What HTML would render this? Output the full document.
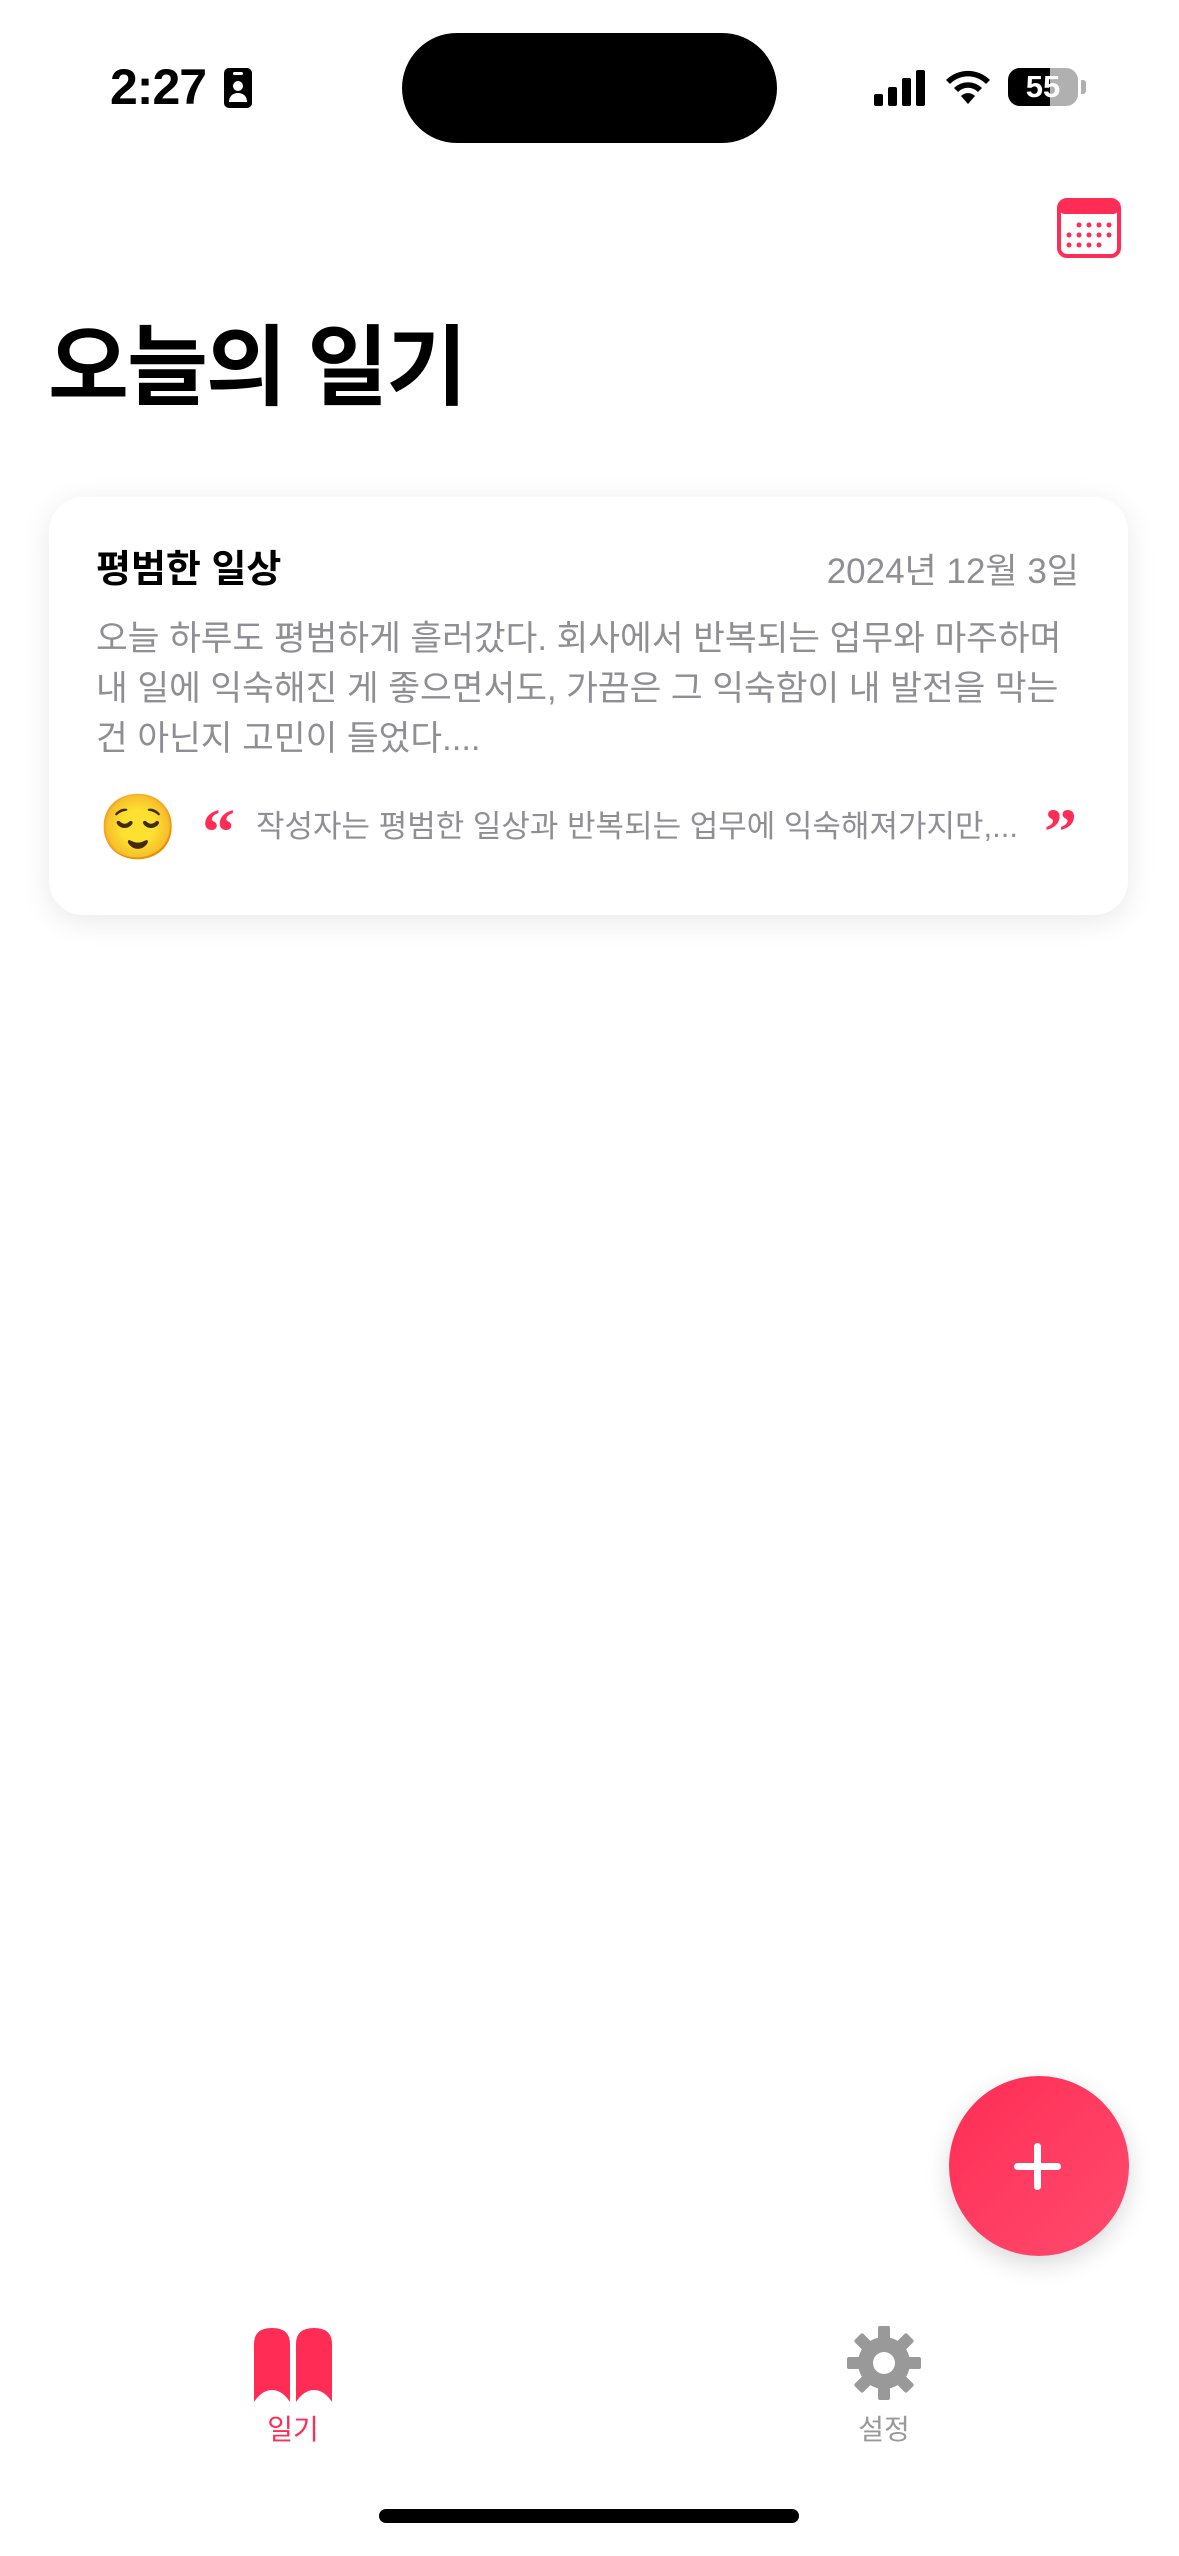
<!DOCTYPE html>
<html><head><meta charset="utf-8"><style>
*{margin:0;padding:0;box-sizing:border-box}
body{width:1179px;height:2556px;background:#fff;position:relative;overflow:hidden;font-family:"Liberation Sans","Noto Sans CJK KR",sans-serif}
.a{position:absolute}
</style></head><body>
<div class="a" style="left:110px;top:58px;font-size:50px;font-weight:bold;letter-spacing:-1px">2:27</div>
<svg class="a" style="left:222px;top:66px" width="32" height="44" viewBox="0 0 32 44"><rect x="2" y="2" width="28" height="40" rx="5" fill="#000"/><circle cx="16" cy="20" r="5" fill="#fff"/><path d="M7 36c0-6 4-9 9-9s9 3 9 9z" fill="#fff"/><rect x="11" y="6" width="10" height="3" rx="1.5" fill="#fff"/></svg>
<div class="a" style="left:402px;top:33px;width:375px;height:110px;border-radius:55px;background:#000"></div>
<svg class="a" style="left:874px;top:68px" width="56" height="38"><rect x="0" y="26" width="9" height="12" rx="2"/><rect x="14" y="19" width="9" height="19" rx="2"/><rect x="28" y="10" width="9" height="28" rx="2"/><rect x="42" y="2" width="9" height="36" rx="2"/></svg>
<svg class="a" style="left:944px;top:66px" width="48" height="38" viewBox="0 0 48 38"><path d="M24 38l-7-8a10 10 0 0 1 14 0z"/><path d="M10 22a20 20 0 0 1 28 0l-4 4a14 14 0 0 0-20 0z"/><path d="M2 14a31 31 0 0 1 44 0l-4 4a25 25 0 0 0-36 0z"/></svg>
<div class="a" style="left:1008px;top:68px;width:70px;height:38px;border-radius:12px;background:#b0b0b0;overflow:hidden"><div style="width:42px;height:38px;background:#000"></div></div>
<div class="a" style="left:1008px;top:68px;width:70px;height:38px;font-size:31px;font-weight:bold;color:#fff;text-align:center;line-height:38px">55</div>
<div class="a" style="left:1081px;top:80px;width:5px;height:14px;border-radius:0 3px 3px 0;background:#b0b0b0"></div>
<svg class="a" style="left:1057px;top:198px" width="64" height="60" viewBox="0 0 64 60"><rect x="2" y="2" width="60" height="56" rx="8" fill="none" stroke="#ff2d55" stroke-width="4"/><rect x="2" y="2" width="60" height="14" rx="6" fill="#ff2d55"/><g fill="#ff2d55"><circle cx="22" cy="27" r="2.5"/><circle cx="32" cy="27" r="2.5"/><circle cx="42" cy="27" r="2.5"/><circle cx="52" cy="27" r="2.5"/><circle cx="12" cy="37" r="2.5"/><circle cx="22" cy="37" r="2.5"/><circle cx="32" cy="37" r="2.5"/><circle cx="42" cy="37" r="2.5"/><circle cx="52" cy="37" r="2.5"/><circle cx="12" cy="47" r="2.5"/><circle cx="22" cy="47" r="2.5"/><circle cx="32" cy="47" r="2.5"/><circle cx="42" cy="47" r="2.5"/></g></svg>
<div class="a" style="left:48px;top:308px;font-size:88px;font-weight:bold;letter-spacing:-2px;line-height:120px">오늘의 일기</div>
<div class="a" style="left:49px;top:497px;width:1079px;height:418px;border-radius:34px;background:#fff;box-shadow:0 6px 30px rgba(0,0,0,0.09)"></div>
<div class="a" style="left:96px;top:545px;font-size:38px;font-weight:bold;line-height:50px">평범한 일상</div>
<div class="a" style="right:100px;top:547px;font-size:35px;color:#8e8e93;line-height:50px">2024년 12월 3일</div>
<div class="a" style="left:96px;top:614px;width:1010px;font-size:34.5px;color:#8e8e93;line-height:50px;white-space:nowrap">오늘 하루도 평범하게 흘러갔다. 회사에서 반복되는 업무와 마주하며<br>내 일에 익숙해진 게 좋으면서도, 가끔은 그 익숙함이 내 발전을 막는<br>건 아닌지 고민이 들었다....</div>
<div class="a" style="left:98px;top:790px;font-size:64px;line-height:76px;font-family:'Noto Color Emoji','DejaVu Sans',sans-serif">😌</div>
<div class="a" style="left:202px;top:798px;font-size:66px;font-weight:bold;color:#ff2d55;line-height:70px;font-family:'Liberation Serif',serif">“</div>
<div class="a" style="left:256px;top:807px;font-size:31px;color:#8e8e93;line-height:40px">작성자는 평범한 일상과 반복되는 업무에 익숙해져가지만,...</div>
<div class="a" style="left:1044px;top:798px;font-size:66px;font-weight:bold;color:#ff2d55;line-height:70px;font-family:'Liberation Serif',serif">”</div>
<div class="a" style="left:949px;top:2076px;width:180px;height:180px;border-radius:50%;background:linear-gradient(135deg,#ff2d55,#ff4b6e);box-shadow:0 8px 24px rgba(0,0,0,0.15)"></div>
<div class="a" style="left:1014px;top:2163px;width:47px;height:7px;border-radius:4px;background:#fff"></div>
<div class="a" style="left:1034px;top:2143px;width:7px;height:47px;border-radius:4px;background:#fff"></div>
<svg class="a" style="left:254px;top:2328px" width="80" height="74" viewBox="0 0 80 74"><path d="M0 16Q0 0 18 0Q36 0 36 16V74Q28 62 18 62Q8 62 0 74z" fill="#ff2d55"/><path d="M42 16Q42 0 60 0Q78 0 78 16V74Q70 62 60 62Q50 62 42 74z" fill="#ff2d55"/></svg>
<div class="a" style="left:253px;top:2410px;width:80px;text-align:center;font-size:28px;color:#ff2d55;line-height:40px">일기</div>
<svg class="a" style="left:847px;top:2326px" width="74" height="74" viewBox="-37 -37 74 74"><g fill="#999"><circle r="26"/><g id="t"><rect x="-6" y="-37" width="12" height="16" rx="2"/></g><use href="#t" transform="rotate(45)"/><use href="#t" transform="rotate(90)"/><use href="#t" transform="rotate(135)"/><use href="#t" transform="rotate(180)"/><use href="#t" transform="rotate(225)"/><use href="#t" transform="rotate(270)"/><use href="#t" transform="rotate(315)"/></g><circle r="11" fill="#fff"/></svg>
<div class="a" style="left:844px;top:2410px;width:80px;text-align:center;font-size:28px;color:#999;line-height:40px">설정</div>
<div class="a" style="left:379px;top:2509px;width:420px;height:14px;border-radius:7px;background:#000"></div>
</body></html>
